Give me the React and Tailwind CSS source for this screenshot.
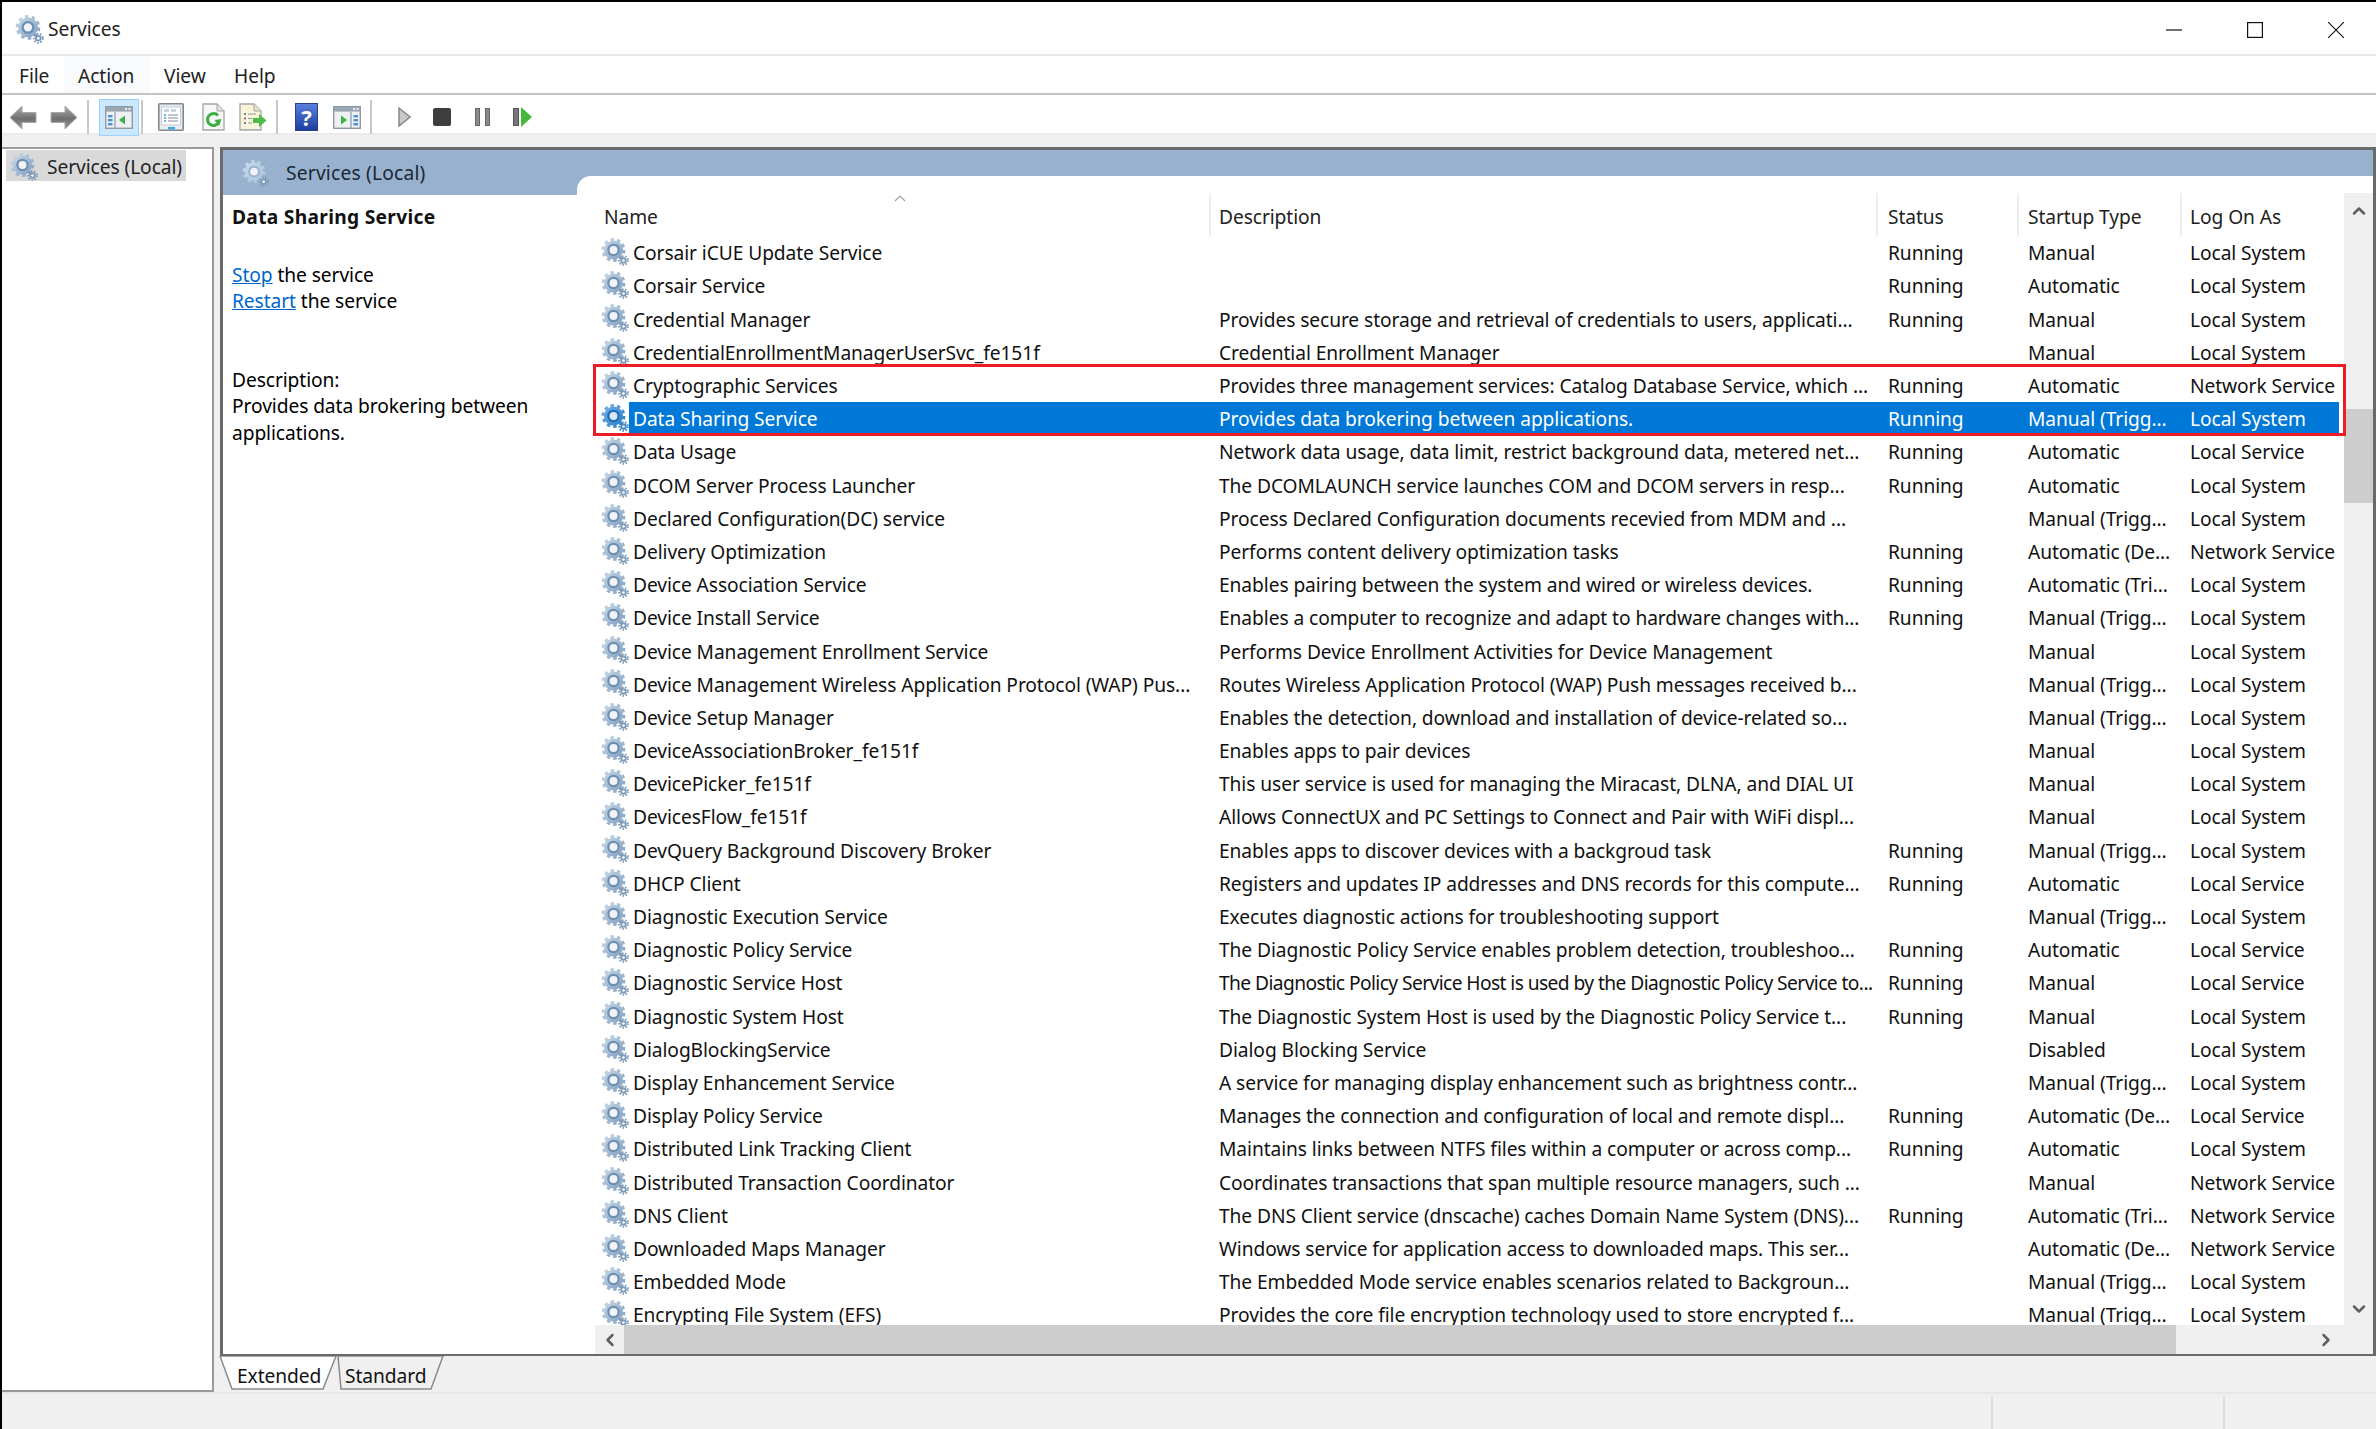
import { ChevronUp, ChevronDown, ChevronLeft, ChevronRight } from "lucide-react";

const rows = [
  ["Corsair iCUE Update Service", "", "Running", "Manual", "Local System"],
  ["Corsair Service", "", "Running", "Automatic", "Local System"],
  ["Credential Manager", "Provides secure storage and retrieval of credentials to users, applicati...", "Running", "Manual", "Local System"],
  ["CredentialEnrollmentManagerUserSvc_fe151f", "Credential Enrollment Manager", "", "Manual", "Local System"],
  ["Cryptographic Services", "Provides three management services: Catalog Database Service, which ...", "Running", "Automatic", "Network Service"],
  ["Data Sharing Service", "Provides data brokering between applications.", "Running", "Manual (Trigg...", "Local System"],
  ["Data Usage", "Network data usage, data limit, restrict background data, metered net...", "Running", "Automatic", "Local Service"],
  ["DCOM Server Process Launcher", "The DCOMLAUNCH service launches COM and DCOM servers in resp...", "Running", "Automatic", "Local System"],
  ["Declared Configuration(DC) service", "Process Declared Configuration documents recevied from MDM and ...", "", "Manual (Trigg...", "Local System"],
  ["Delivery Optimization", "Performs content delivery optimization tasks", "Running", "Automatic (De...", "Network Service"],
  ["Device Association Service", "Enables pairing between the system and wired or wireless devices.", "Running", "Automatic (Tri...", "Local System"],
  ["Device Install Service", "Enables a computer to recognize and adapt to hardware changes with...", "Running", "Manual (Trigg...", "Local System"],
  ["Device Management Enrollment Service", "Performs Device Enrollment Activities for Device Management", "", "Manual", "Local System"],
  ["Device Management Wireless Application Protocol (WAP) Pus...", "Routes Wireless Application Protocol (WAP) Push messages received b...", "", "Manual (Trigg...", "Local System"],
  ["Device Setup Manager", "Enables the detection, download and installation of device-related so...", "", "Manual (Trigg...", "Local System"],
  ["DeviceAssociationBroker_fe151f", "Enables apps to pair devices", "", "Manual", "Local System"],
  ["DevicePicker_fe151f", "This user service is used for managing the Miracast, DLNA, and DIAL UI", "", "Manual", "Local System"],
  ["DevicesFlow_fe151f", "Allows ConnectUX and PC Settings to Connect and Pair with WiFi displ...", "", "Manual", "Local System"],
  ["DevQuery Background Discovery Broker", "Enables apps to discover devices with a backgroud task", "Running", "Manual (Trigg...", "Local System"],
  ["DHCP Client", "Registers and updates IP addresses and DNS records for this compute...", "Running", "Automatic", "Local Service"],
  ["Diagnostic Execution Service", "Executes diagnostic actions for troubleshooting support", "", "Manual (Trigg...", "Local System"],
  ["Diagnostic Policy Service", "The Diagnostic Policy Service enables problem detection, troubleshoo...", "Running", "Automatic", "Local Service"],
  ["Diagnostic Service Host", "The Diagnostic Policy Service Host is used by the Diagnostic Policy Service to...", "Running", "Manual", "Local Service"],
  ["Diagnostic System Host", "The Diagnostic System Host is used by the Diagnostic Policy Service t...", "Running", "Manual", "Local System"],
  ["DialogBlockingService", "Dialog Blocking Service", "", "Disabled", "Local System"],
  ["Display Enhancement Service", "A service for managing display enhancement such as brightness contr...", "", "Manual (Trigg...", "Local System"],
  ["Display Policy Service", "Manages the connection and configuration of local and remote displ...", "Running", "Automatic (De...", "Local Service"],
  ["Distributed Link Tracking Client", "Maintains links between NTFS files within a computer or across comp...", "Running", "Automatic", "Local System"],
  ["Distributed Transaction Coordinator", "Coordinates transactions that span multiple resource managers, such ...", "", "Manual", "Network Service"],
  ["DNS Client", "The DNS Client service (dnscache) caches Domain Name System (DNS)...", "Running", "Automatic (Tri...", "Network Service"],
  ["Downloaded Maps Manager", "Windows service for application access to downloaded maps. This ser...", "", "Automatic (De...", "Network Service"],
  ["Embedded Mode", "The Embedded Mode service enables scenarios related to Backgroun...", "", "Manual (Trigg...", "Local System"],
  ["Encrypting File System (EFS)", "Provides the core file encryption technology used to store encrypted f...", "", "Manual (Trigg...", "Local System"],
];

function Gear({ className, selected, faint }) {
  const top = selected ? "#6fb0e6" : faint ? "#c9d9e8" : "#c8d7e6";
  const bottom = selected ? "#2c7cc6" : faint ? "#a9c3dc" : "#7f9fc0";
  const ring = selected ? "#1f6cb5" : faint ? "#97b5d2" : "#6d8fb2";
  const hole = selected ? "#d6e8f7" : "#f0f4f8";
  const small = selected ? "#3f86c8" : faint ? "#7f9ab5" : "#7c99b6";
  const id = selected ? "gearSelected" : faint ? "gearFaint" : "gearNormal";
  return (
    <svg viewBox="0 0 28 28" className={className}>
      <defs>
        <linearGradient id={id} x1="0" y1="0" x2="1" y2="1">
          <stop offset="0" stopColor={top} />
          <stop offset="1" stopColor={bottom} />
        </linearGradient>
      </defs>
      <circle cx="12.5" cy="12" r="10.4" fill="none" stroke={`url(#${id})`} strokeWidth="3" strokeDasharray="3.4 3.13" />
      <circle cx="12.5" cy="12" r="9.6" fill={`url(#${id})`} />
      <circle cx="12.5" cy="12" r="6.2" fill={ring} />
      <circle cx="12.5" cy="12" r="4" fill={hole} />
      <circle cx="22.5" cy="22.5" r="4.4" fill="none" stroke={small} strokeWidth="1.8" strokeDasharray="1.6 1.5" />
      <circle cx="22.5" cy="22.5" r="3.2" fill={small} />
      <circle cx="22.5" cy="22.5" r="1.3" fill="#ffffff" />
    </svg>
  );
}

function ArrowIcon({ flip }) {
  return (
    <svg viewBox="0 0 28 25" className={`w-[28px] h-[25px] ${flip ? "-scale-x-100" : ""}`}>
      <defs>
        <linearGradient id="arrowFill" x1="0" y1="0" x2="0" y2="1">
          <stop offset="0" stopColor="#b0b0b0" />
          <stop offset="0.55" stopColor="#6f6f6f" />
          <stop offset="1" stopColor="#9a9a9a" />
        </linearGradient>
      </defs>
      <path d="M1 12.5 13 1v6.5h14v10H13V24z" fill="url(#arrowFill)" stroke="#a8a8a8" strokeWidth="1" />
    </svg>
  );
}

function PaneIcon({ right }) {
  return (
    <svg viewBox="0 0 28 23" className="w-[28px] h-[23px]">
      <rect x="0.7" y="0.7" width="26.6" height="21.6" fill="#eef1f4" stroke="#8e9aa6" strokeWidth="1.4" />
      <rect x="1" y="1" width="26" height="4.6" fill="#9aa6b2" />
      <rect x="20" y="2" width="2" height="2" fill="#e8edf2" />
      <rect x="23.5" y="2" width="2" height="2" fill="#e8edf2" />
      <path d={right ? "M18 6v16" : "M10 6v16"} stroke="#8e9aa6" strokeWidth="1.2" />
      {right ? (
        <g>
          <rect x="20.5" y="9" width="4.5" height="2.4" fill="#4e8fd0" />
          <rect x="20.5" y="13" width="4.5" height="2.4" fill="#4e8fd0" />
          <rect x="20.5" y="17" width="4.5" height="2.4" fill="#4e8fd0" />
          <path d="M8 9.5l6 4.5-6 4.5z" fill="#3cb043" />
        </g>
      ) : (
        <g>
          <rect x="3" y="9" width="4.5" height="2.4" fill="#4e8fd0" />
          <rect x="3" y="13" width="4.5" height="2.4" fill="#4e8fd0" />
          <rect x="3" y="17" width="4.5" height="2.4" fill="#4e8fd0" />
          <path d="M20 9.5l-6 4.5 6 4.5z" fill="#3cb043" />
        </g>
      )}
    </svg>
  );
}

function PropertiesIcon() {
  return (
    <svg viewBox="0 0 26 28" className="w-[26px] h-[28px]">
      <rect x="0.8" y="0.8" width="24.4" height="26.4" rx="1" fill="#e9edf1" stroke="#7f8790" strokeWidth="1.6" />
      <rect x="3.5" y="4" width="19" height="18" fill="#ffffff" stroke="#b8c0c8" strokeWidth="0.8" />
      <rect x="6" y="6" width="5" height="3" fill="#c9d4de" />
      <rect x="13" y="6" width="5" height="3" fill="#c9d4de" />
      <path d="M10 12h10M10 15h10M10 18h10" stroke="#7f8c99" strokeWidth="1.2" />
      <path d="M6 12h2M6 15h2M6 18h2" stroke="#3d9ad9" strokeWidth="1.4" />
      <rect x="10" y="24" width="7" height="2.4" fill="#35a7e6" />
    </svg>
  );
}

function RefreshIcon() {
  return (
    <svg viewBox="0 0 23 28" className="w-[23px] h-[28px]">
      <path d="M1 1h14l7 7v19H1z" fill="#f7f7f7" stroke="#a5a5a5" strokeWidth="1.3" />
      <path d="M15 1v7h7" fill="#e2e2e2" stroke="#a5a5a5" strokeWidth="1" />
      <path d="M16 12.5a6 6 0 1 0 1 6.5" fill="none" stroke="#3cb043" strokeWidth="3" />
      <path d="M12.5 17l7-1-2.5 7z" fill="#3cb043" />
    </svg>
  );
}

function ExportIcon() {
  return (
    <svg viewBox="0 0 28 28" className="w-[28px] h-[28px]">
      <path d="M1 1h14l7 7v19H1z" fill="#f9f3d9" stroke="#a5a5a5" strokeWidth="1.3" />
      <path d="M15 1v7h7" fill="#e9e2c6" stroke="#a5a5a5" strokeWidth="1" />
      <path d="M5 11h2M5 15.5h2M5 20h2" stroke="#50606e" strokeWidth="1.6" />
      <path d="M9 11h8M9 15.5h4M9 20h4" stroke="#8f98a0" strokeWidth="1.2" />
      <path d="M14 15h6v-4l7.5 6.5-7.5 6.5v-4h-6z" fill="#4cbb4a" />
    </svg>
  );
}

function HelpIcon() {
  return (
    <div className="w-[23px] h-[28px] bg-gradient-to-b from-[#5b7fdc] to-[#1f3f9e] border border-[#27408f] flex items-center justify-center text-white font-bold text-[22px] leading-none">
      ?
    </div>
  );
}

function Separator({ left }) {
  return <div className={`h-[34px] w-[2px] bg-[#c8c8c8] ${left}`} />;
}

function Row({ row, selected }) {
  const textColor = selected ? "text-white" : "text-[#111]";
  // the one description that is longer than the column in this font
  const descClass = row[1].length > 75 ? "whitespace-nowrap tracking-[-0.58px]" : "whitespace-nowrap";
  return (
    <div className="flex h-[33.2px] items-start">
      <div className="w-[34px] shrink-0 pl-[6px] pt-[2px]">
        <Gear className="w-[28px] h-[28px]" selected={selected} />
      </div>
      <div className={`grid grid-cols-[590px_669px_140px_162px_149px] items-center w-[1710px] h-[31px] pt-[4px] ${selected ? "bg-[#0078d7]" : ""} ${textColor}`}>
        <div className="pl-[4px] whitespace-nowrap">{row[0]}</div>
        <div className={descClass}>{row[1]}</div>
        <div className="whitespace-nowrap">{row[2]}</div>
        <div className="whitespace-nowrap">{row[3]}</div>
        <div className="whitespace-nowrap">{row[4]}</div>
      </div>
    </div>
  );
}

function ListHeader() {
  return (
    <div className="relative grid grid-cols-[614px_667px_141px_163px_164px] h-[43px] shrink-0 text-[#222]">
      <div className="pl-[9px] pt-[11px]">Name</div>
      <div className="border-l-2 border-[#eeeeee] pl-[8px] pt-[11px]">Description</div>
      <div className="border-l-2 border-[#eeeeee] pl-[10px] pt-[11px]">Status</div>
      <div className="border-l-2 border-[#eeeeee] pl-[9px] pt-[11px]">Startup Type</div>
      <div className="border-l-2 border-[#eeeeee] pl-[8px] pt-[11px]">Log On As</div>
      <svg viewBox="0 0 12 7" className="absolute left-[299px] top-[2px] w-[12px] h-[7px]">
        <path d="M1 6l5-5 5 5" fill="none" stroke="#a0a0a0" strokeWidth="1.2" />
      </svg>
    </div>
  );
}

function Tabs() {
  return (
    <div className="flex h-[35px] items-start">
      <div className="relative w-[122px] h-[35px] -ml-[2px]">
        <svg viewBox="0 0 122 35" className="absolute inset-0 w-full h-full">
          <path d="M2 0l12 33h91l13-33z" fill="#ffffff" stroke="#8a8a8a" strokeWidth="1.5" />
        </svg>
        <span className="relative block pl-[19px] pt-[7px] text-[#111]">Extended</span>
      </div>
      <div className="relative w-[108px] h-[35px] -ml-[4px]">
        <svg viewBox="0 0 108 35" className="absolute inset-0 w-full h-full">
          <path d="M2 0l3 33h90l12-33z" fill="#f0f0f0" stroke="#8a8a8a" strokeWidth="1.5" />
        </svg>
        <span className="relative block pl-[9px] pt-[7px] text-[#111]">Standard</span>
      </div>
    </div>
  );
}

export default function App() {
  return (
    <div
      className="w-[2376px] h-[1429px] overflow-hidden bg-[#f0f0f0] border-t-2 border-l-2 border-black flex flex-col text-[19.2px] tracking-[-0.08px] leading-[26.5px] text-black"
      style={{ fontFamily: '"Noto Sans", "Open Sans", sans-serif' }}
    >
      {/* title bar */}
      <div className="h-[54px] shrink-0 bg-white flex items-center pt-[3px] border-b-2 border-[#e8e8e8]">
        <Gear className="w-[29px] h-[29px] ml-[13px]" />
        <span className="ml-[4px] text-[#222]">Services</span>
        <div className="ml-auto flex items-center">
          <svg viewBox="0 0 16 16" className="w-[16px] h-[16px] mr-[65px]"><path d="M0 8h16" stroke="#111" strokeWidth="1.2" /></svg>
          <svg viewBox="0 0 16 16" className="w-[16px] h-[16px] mr-[65px]"><rect x="0.6" y="0.6" width="14.8" height="14.8" fill="none" stroke="#111" strokeWidth="1.2" /></svg>
          <svg viewBox="0 0 16 16" className="w-[16px] h-[16px] mr-[32px]"><path d="M0 0l16 16M16 0L0 16" stroke="#111" strokeWidth="1.1" /></svg>
        </div>
      </div>

      {/* menu */}
      <div className="h-[39px] shrink-0 bg-white flex items-center border-b-2 border-[#c4c4c4] text-[#222]">
        <span className="ml-[17px] w-[45px] pt-[3px]">File</span>
        <span className="w-[86px] pl-[14px] h-full flex items-center pt-[3px] bg-[#f8fafc]">Action</span>
        <span className="ml-[14px] w-[70px] pt-[3px]">View</span>
        <span className="pt-[3px]">Help</span>
      </div>

      {/* toolbar */}
      <div className="h-[40px] shrink-0 bg-white flex items-center pt-[6px] border-b-2 border-[#ebebeb]">
        <div className="ml-[7px]"><ArrowIcon /></div>
        <div className="ml-[13px]"><ArrowIcon flip /></div>
        <Separator left="ml-[9px]" />
        <div className="ml-[10px] w-[40px] h-[37px] shrink-0 bg-[#cce8ff] border border-[#99d1ff] flex items-center justify-center">
          <PaneIcon />
        </div>
        <Separator left="ml-[2px]" />
        <div className="ml-[15px]"><PropertiesIcon /></div>
        <div className="ml-[18px]"><RefreshIcon /></div>
        <div className="ml-[14px]"><ExportIcon /></div>
        <Separator left="ml-[9px]" />
        <div className="ml-[17px]"><HelpIcon /></div>
        <div className="ml-[15px]"><PaneIcon right /></div>
        <Separator left="ml-[9px]" />
        <svg viewBox="0 0 13 20" className="ml-[26px] w-[13px] h-[20px]"><path d="M1 1l11 9-11 9z" fill="#c9c9c9" stroke="#8c8c8c" strokeWidth="1.6" /></svg>
        <div className="ml-[22px] w-[18px] h-[18px] rounded-[2px] bg-[#3e3e3e]" />
        <div className="ml-[24px] flex gap-[5px]">
          <div className="w-[5px] h-[18px] bg-[#8a8a8a] border border-[#666]" />
          <div className="w-[5px] h-[18px] bg-[#8a8a8a] border border-[#666]" />
        </div>
        <div className="ml-[23px] flex items-center gap-[2px]">
          <div className="w-[6px] h-[18px] bg-[#777] border border-[#555]" />
          <svg viewBox="0 0 11 20" className="w-[11px] h-[20px]"><path d="M0 0l11 10L0 20z" fill="#44b83c" /></svg>
        </div>
      </div>

      {/* body */}
      <div className="flex-1 flex min-h-0 pt-[12px]">
        <div className="w-[212px] h-[1245px] shrink-0 bg-white border-t-2 border-r-2 border-b-2 border-[#9a9a9a] pl-[4px] pt-[1px]">
          <div className="flex items-center w-[180px] h-[31px] bg-[#d9d9d9] pl-[4px] pt-[3px] text-[#222]">
            <Gear className="w-[28px] h-[28px] shrink-0" />
            <span className="ml-[9px]">Services (Local)</span>
          </div>
        </div>

        <div className="ml-[6px] flex-1 min-w-0 flex flex-col">
          <div className="h-[1209px] shrink-0 flex flex-col bg-white border-t-[3px] border-l-[3px] border-r-[3px] border-b-2 border-t-[#6a6a6a] border-l-[#6a6a6a] border-r-[#6a6a6a] border-b-[#6a6a6a]">
            {/* blue header */}
            <div className="h-[45px] shrink-0 flex bg-[#98b1ce]">
              <div className="w-[354px] flex items-center pt-[2px] text-[#1b2733]">
                <Gear className="w-[27px] h-[27px] ml-[19px]" faint />
                <span className="ml-[17px] tracking-[0.2px]">Services (Local)</span>
              </div>
              <div className="flex-1 mt-[26px] bg-white rounded-tl-[14px]" />
            </div>

            <div className="flex-1 min-h-0 flex">
              {/* detail pane */}
              <div className="w-[372px] shrink-0 pl-[9px] pt-[9px]">
                <div className="font-bold tracking-[0.3px] text-[#111]">Data Sharing Service</div>
                <div className="mt-[31px]">
                  <a href="#" className="text-[#0066cc] underline">Stop</a> the service
                </div>
                <div>
                  <a href="#" className="text-[#0066cc] underline">Restart</a> the service
                </div>
                <div className="mt-[52px]">Description:</div>
                <div className="w-[340px]">Provides data brokering between applications.</div>
              </div>

              {/* list + scrollbars */}
              <div className="flex-1 min-w-0 -mt-[2px] flex flex-col">
                <div className="flex-1 min-h-0 flex">
                  <div className="relative w-[1749px] shrink-0 flex flex-col">
                    <ListHeader />
                    <div className="flex-1 min-h-0 overflow-hidden">
                      {rows.map((row, i) => (
                        <Row key={row[0]} row={row} selected={i === 5} />
                      ))}
                    </div>
                    <div className="absolute left-[-2px] top-[171px] w-[1753px] h-[72px] border-[3px] border-[#ed1c24]" />
                  </div>
                  <div className="flex-1 flex flex-col items-center bg-[#f0f0f0]">
                    <ChevronUp className="mt-[8px] w-[20px] h-[20px] text-[#606060]" strokeWidth={3} />
                    <div className="mt-[188px] w-full h-[94px] bg-[#cdcdcd]" />
                    <ChevronDown className="mt-auto mb-[6px] w-[20px] h-[20px] text-[#606060]" strokeWidth={3} />
                  </div>
                </div>
                <div className="h-[29px] shrink-0 flex items-center bg-[#f0f0f0]">
                  <div className="w-[29px] flex justify-center">
                    <ChevronLeft className="w-[20px] h-[20px] text-[#606060]" strokeWidth={3} />
                  </div>
                  <div className="w-[1552px] h-full bg-[#cdcdcd]" />
                  <ChevronRight className="ml-[140px] w-[20px] h-[20px] text-[#606060]" strokeWidth={3} />
                </div>
              </div>
            </div>
          </div>
          <Tabs />
        </div>
      </div>

      {/* status bar */}
      <div className="h-[37px] shrink-0 flex border-t-2 border-[#e6e6e6] pt-[2px]">
        <div className="w-[1989px]" />
        <div className="w-[232px] border-l-2 border-[#dcdcdc]" />
        <div className="flex-1 border-l-2 border-[#dcdcdc]" />
      </div>
    </div>
  );
}
